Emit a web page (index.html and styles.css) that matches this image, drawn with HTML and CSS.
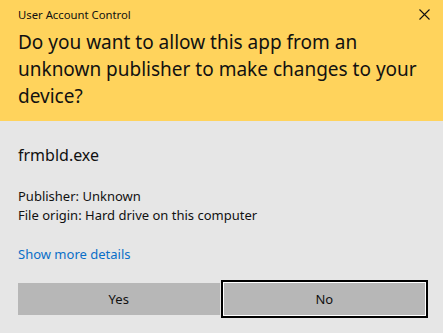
FILE: index.html
```html
<!DOCTYPE html>
<html lang="en">
<head>
  <meta charset="UTF-8" />
  <title>User Account Control</title>
  <link rel="stylesheet" href="styles.css">
</head>
<body>
  <div class="dialog">
    <div class="header">
      <div class="title-bar">
        <span class="title">User Account Control</span>
        <span class="close">
          <svg width="11" height="11" viewBox="0 0 11 11">
            <path d="M0.5 0.5 L10.5 10.5 M10.5 0.5 L0.5 10.5" stroke="#111" stroke-width="1.1" fill="none"/>
          </svg>
        </span>
      </div>
      <h1>Do you want to allow this app from an unknown publisher to make changes to your device?</h1>
    </div>

    <div class="content">
      <div class="app-name">frmbld.exe</div>
      <div class="info">
        <p>Publisher: Unknown</p>
        <p>File origin: Hard drive on this computer</p>
      </div>
      <a class="details" href="#">Show more details</a>

      <div class="buttons">
        <button class="btn">Yes</button>
        <button class="btn focused">No</button>
      </div>
    </div>
  </div>
</body>
</html>
```

FILE: styles.css
```css
* { box-sizing: border-box; }
html, body {
  margin: 0; height: 100%;
  font-family: 'Noto Sans', 'Open Sans', sans-serif;
  color: #111;
}
.dialog {
  width: 443px; height: 333px;
  background: #e6e6e6;
  display: flex; flex-direction: column;
}
.header {
  background: #ffd35c;
  padding: 4px 12px 9px 18px;
  height: 121px;
}
.title-bar {
  display: flex; justify-content: space-between; align-items: center;
  height: 20px;
}
.title { font-size: 11.3px; }
.close { display: flex; margin-right: 1px; }
h1 {
  margin: 5px 0 0;
  font-size: 19px; font-weight: normal;
  line-height: 27px;
}
.content {
  padding: 22px 15px 0 18px;
}
.app-name { font-size: 16px; line-height: 24px; }
.info { margin-top: 20px; }
.info p { margin: 0; font-size: 13px; line-height: 19px; }
.details {
  display: inline-block; margin-top: 20px;
  font-size: 13px; line-height: 19px;
  color: #0a6fc8; text-decoration: none;
}
.buttons {
  display: flex; align-items: center;
  margin-top: 16px;
}
.btn {
  height: 32px; width: 202px;
  background: #b7b7b7; border: none;
  font-family: inherit; font-size: 13px; color: #111;
  padding: 0;
}
.btn.focused {
  height: 38px; width: 208px;
  margin-left: 1px;
  border: 2px solid #000;
  box-shadow: inset 0 0 0 1px #fff;
}
```
